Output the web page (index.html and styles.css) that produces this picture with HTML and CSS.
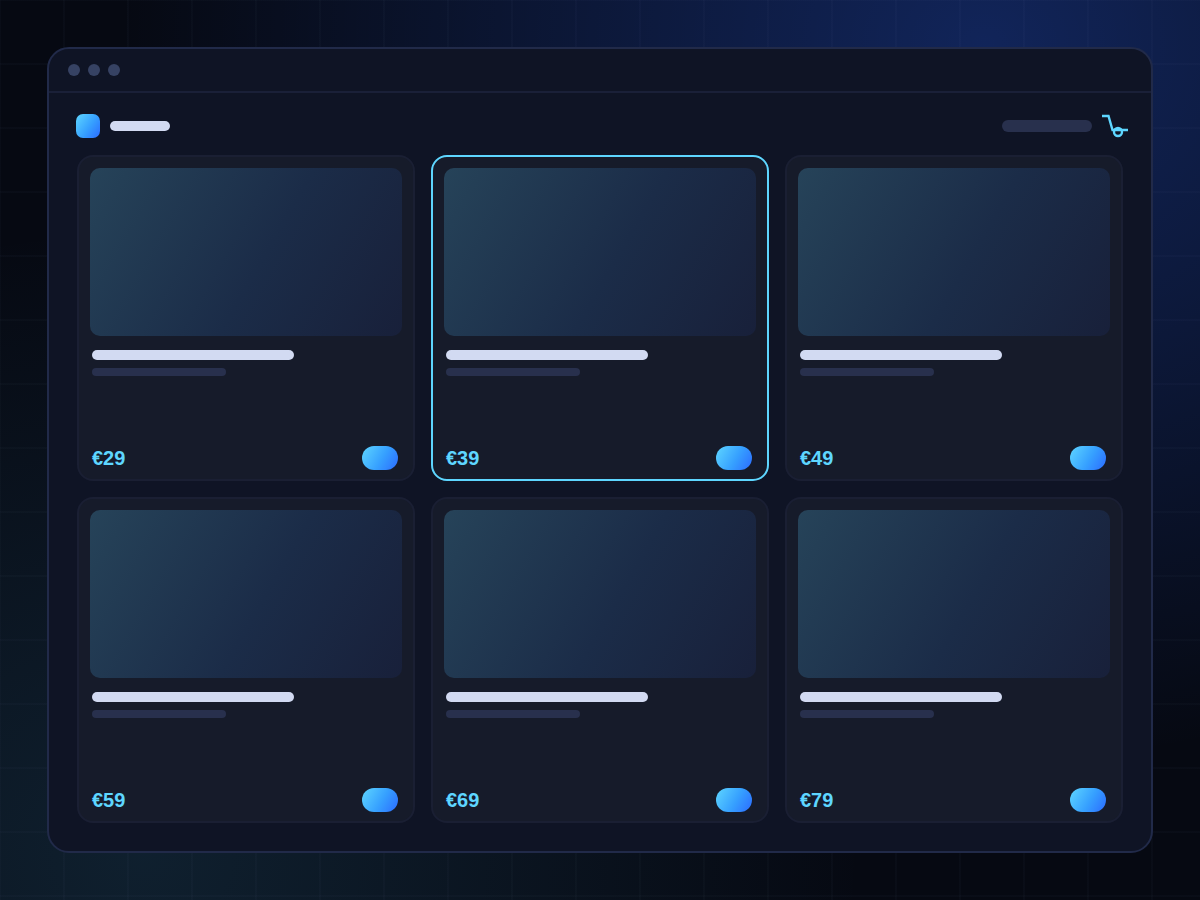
FILE: index.html
```
<!DOCTYPE html>
<html lang="en">
<head>
  <meta charset="UTF-8" />
  <meta name="viewport" content="width=device-width, initial-scale=1" />
  <title>Shop</title>
  <link rel="stylesheet" href="styles.css">
</head>
<body>
  <div class="window">
    <div class="titlebar">
      <span class="dot"></span>
      <span class="dot"></span>
      <span class="dot"></span>
    </div>

    <header class="topbar">
      <span class="logo"></span>
      <span class="brand"></span>
      <span class="search"></span>
      <button type="button" class="cart" aria-label="Cart">
        <svg viewBox="0 0 28 28" width="28" height="28" fill="none" stroke="#5ed6ff" stroke-width="2.4">
          <path d="M2 4h6.500l4 14h15.500" />
          <circle cx="18" cy="20" r="4" />
        </svg>
      </button>
    </header>

    <main class="grid">
      <article class="card">
        <div class="photo"></div>
        <div class="line title"></div>
        <div class="line subtitle"></div>
        <div class="buy">
          <span class="price">€29</span>
          <button type="button" class="add" aria-label="Add to cart"></button>
        </div>
      </article>
      <article class="card selected">
        <div class="photo"></div>
        <div class="line title"></div>
        <div class="line subtitle"></div>
        <div class="buy">
          <span class="price">€39</span>
          <button type="button" class="add" aria-label="Add to cart"></button>
        </div>
      </article>
      <article class="card">
        <div class="photo"></div>
        <div class="line title"></div>
        <div class="line subtitle"></div>
        <div class="buy">
          <span class="price">€49</span>
          <button type="button" class="add" aria-label="Add to cart"></button>
        </div>
      </article>
      <article class="card">
        <div class="photo"></div>
        <div class="line title"></div>
        <div class="line subtitle"></div>
        <div class="buy">
          <span class="price">€59</span>
          <button type="button" class="add" aria-label="Add to cart"></button>
        </div>
      </article>
      <article class="card">
        <div class="photo"></div>
        <div class="line title"></div>
        <div class="line subtitle"></div>
        <div class="buy">
          <span class="price">€69</span>
          <button type="button" class="add" aria-label="Add to cart"></button>
        </div>
      </article>
      <article class="card">
        <div class="photo"></div>
        <div class="line title"></div>
        <div class="line subtitle"></div>
        <div class="buy">
          <span class="price">€79</span>
          <button type="button" class="add" aria-label="Add to cart"></button>
        </div>
      </article>
    </main>
  </div>
</body>
</html>
```
FILE: styles.css
```
* {
  box-sizing: border-box;
}
body {
  margin: 0;
  min-height: 100vh;
  padding: 47px;
  display: flex;
  font-family: "Liberation Sans", Arial, sans-serif;
  background-color: #060912;
  background-image:
    linear-gradient(90deg, rgba(150, 180, 230, 0.025) 1px, transparent 1px, transparent 63px, rgba(150, 180, 230, 0.025) 63px),
    linear-gradient(rgba(150, 180, 230, 0.025) 1px, transparent 1px, transparent 63px, rgba(150, 180, 230, 0.025) 63px),
    radial-gradient(72% 80% at 82% 5%, rgba(43, 100, 255, 0.3), transparent),
    radial-gradient(60% 70% at 12% 95%, rgba(70, 170, 220, 0.14), transparent);
  background-size: 64px 64px, 64px 64px, 100% 100%, 100% 100%;
}
.window {
  flex: 1;
  display: flex;
  flex-direction: column;
  background-color: #0f1425;
  border: 2px solid #212a49;
  border-radius: 22px;
}
.titlebar {
  display: flex;
  align-items: center;
  gap: 8px;
  height: 44px;
  padding: 0 19px;
  border-bottom: 2px solid #1a2038;
}
.dot {
  width: 12px;
  height: 12px;
  border-radius: 50%;
  background-color: #364263;
}
.topbar {
  display: flex;
  align-items: center;
  gap: 10px;
  height: 62px;
  padding: 4px 23px 0 27px;
}
.logo {
  width: 24px;
  height: 24px;
  border-radius: 7px;
  background-image: linear-gradient(125deg, #5ed6ff, #36a0ff 55%, #2b6bff);
}
.brand {
  width: 60px;
  height: 10px;
  border-radius: 5px;
  background-color: #d2daf2;
}
.search {
  width: 90px;
  height: 12px;
  margin-left: auto;
  border-radius: 6px;
  background-color: #28304d;
}
.cart {
  display: flex;
  padding: 0;
  border: none;
  background: none;
  cursor: pointer;
}
.cart svg {
  margin-left: -2px;
}
.grid {
  flex: 1;
  display: grid;
  grid-template-columns: repeat(3, 1fr);
  grid-auto-rows: 1fr;
  gap: 16px;
  padding: 0 28px 28px;
}
.card {
  display: flex;
  flex-direction: column;
  padding: 11px 11px 9px;
  background-color: #161b2a;
  border: 2px solid #1a1f33;
  border-radius: 16px;
}
.selected {
  border-color: #5ed6ff;
}
.photo {
  height: 168px;
  margin-bottom: 14px;
  border-radius: 10px;
  background-image: linear-gradient(120deg, #264359, #1b2c48 55%, #18203a);
}
.line {
  margin-left: 2px;
  border-radius: 5px;
}
.title {
  width: 202px;
  max-width: 100%;
  height: 10px;
  margin-bottom: 8px;
  background-color: #d2daf2;
}
.subtitle {
  width: 134px;
  max-width: 100%;
  height: 8px;
  background-color: #28304d;
}
.buy {
  display: flex;
  align-items: center;
  justify-content: space-between;
  margin-top: auto;
  padding: 0 4px 0 2px;
}
.price {
  font-size: 20px;
  line-height: 24px;
  font-weight: bold;
  color: #5ed6ff;
}
.add {
  width: 36px;
  height: 24px;
  padding: 0;
  border: none;
  border-radius: 12px;
  background-image: linear-gradient(120deg, #5ed6ff, #36a0ff 55%, #2b6bff);
  cursor: pointer;
}
```
